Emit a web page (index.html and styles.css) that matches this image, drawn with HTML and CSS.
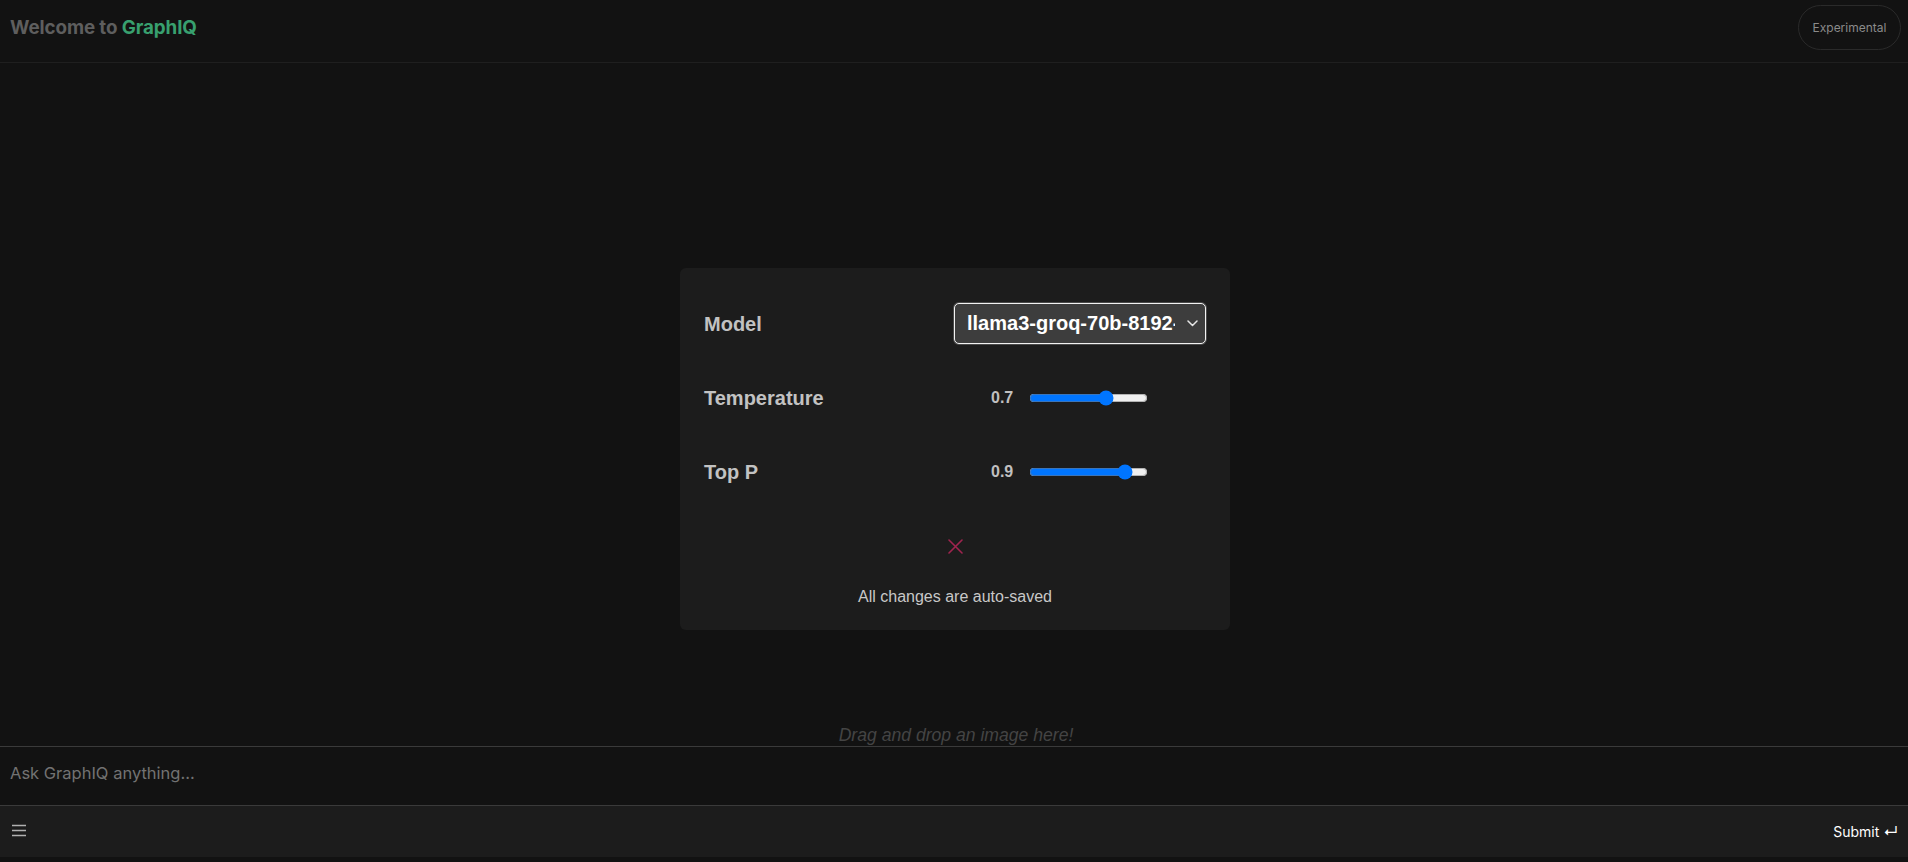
FILE: index.html
```html
<!DOCTYPE html>
<html lang="en">
<head>
<meta charset="utf-8">
<title>GraphIQ</title>
<link rel="stylesheet" href="styles.css">
</head>
<body>
<header class="topbar">
  <h1 class="brand">Welcome to <span class="brand-accent">GraphIQ</span></h1>
  <button class="pill">Experimental</button>
</header>
<main class="main">
  <section class="card">
    <div class="row">
      <label class="label" for="model">Model</label>
      <div class="control">
        <span class="select-wrap">
          <select id="model" class="select">
            <option>llama3-groq-70b-8192-tool-use-preview</option>
          </select>
          <svg class="chevron" width="11" height="7" viewBox="0 0 11 7"><path d="M1 1l4.5 4.5L10 1" fill="none" stroke="#e6e6e6" stroke-width="1.5" stroke-linecap="round" stroke-linejoin="round"/></svg>
        </span>
      </div>
    </div>
    <div class="row">
      <label class="label" for="temp">Temperature</label>
      <div class="control control-range">
        <span class="value">0.7</span>
        <input id="temp" class="range" type="range" min="0" max="1.05" step="0.01" value="0.7">
      </div>
    </div>
    <div class="row">
      <label class="label" for="topp">Top P</label>
      <div class="control control-range">
        <span class="value">0.9</span>
        <input id="topp" class="range" type="range" min="0" max="1.05" step="0.01" value="0.9">
      </div>
    </div>
    <div class="row row-center">
      <button class="close" aria-label="Close">
        <svg width="15" height="15" viewBox="0 0 15 15"><path d="M1 1l13 13M14 1L1 14" stroke="#a1244f" stroke-width="1.6" stroke-linecap="round"/></svg>
      </button>
    </div>
    <p class="note">All changes are auto-saved</p>
  </section>
  <p class="drop">Drag and drop an image here!</p>
</main>
<footer class="composer">
  <div class="input-area">
    <textarea class="input" placeholder="Ask GraphIQ anything..."></textarea>
  </div>
  <div class="toolbar">
    <button class="menu" aria-label="Menu">
      <svg width="16" height="13" viewBox="0 0 16 13"><path d="M1 1.5h14M1 6.5h14M1 11.5h14" stroke="#b0b0b0" stroke-width="1.5"/></svg>
    </button>
    <button class="submit">Submit <span class="enter">↵</span></button>
  </div>
</footer>
</body>
</html>
```
FILE: styles.css
```css
html, body {
  margin: 0;
  padding: 0;
}
body {
  height: 100vh;
  display: flex;
  flex-direction: column;
  background: #121212;
  font-family: "Liberation Sans", Arial, sans-serif;
  overflow: hidden;
}
button {
  font: inherit;
  background: none;
  border: none;
  padding: 0;
  cursor: pointer;
}
.topbar {
  height: 62px;
  box-sizing: content-box;
  border-bottom: 1px solid #1f1f1f;
  display: flex;
  align-items: center;
  justify-content: space-between;
  padding: 0 7px 0 10px;
}
.brand {
  margin: 0 0 7px 0;
  font-family: Inter, sans-serif;
  font-weight: 700;
  font-size: 18.8px;
  color: #5e5e5e;
  letter-spacing: -0.1px;
}
.brand-accent {
  color: #38a06f;
}
.pill {
  margin-bottom: 8px;
  width: 103px;
  height: 45px;
  border: 1px solid #2a2a2a;
  border-radius: 23px;
  color: #8a8a8a;
  font-family: Inter, sans-serif;
  font-size: 12px;
}
.main {
  flex: 1;
  display: flex;
  flex-direction: column;
  align-items: center;
  min-height: 0;
}
.card {
  margin: 205px 0 0 2px;
  width: 550px;
  box-sizing: border-box;
  padding: 24px;
  background: #1c1c1c;
  border-radius: 6px;
  display: flex;
  flex-direction: column;
  gap: 10px;
}
.row {
  height: 64px;
  display: flex;
  align-items: center;
}
.row-center {
  justify-content: center;
}
.label {
  width: 250px;
  flex: none;
  font-weight: 700;
  font-size: 20px;
  color: #c2c2c2;
}
.control {
  flex: 1;
  display: flex;
  align-items: center;
}
.control-range {
  padding-left: 37px;
  gap: 16px;
}
.select-wrap {
  position: relative;
  display: block;
  width: 252px;
  margin-top: -2px;
}
.select {
  appearance: none;
  -webkit-appearance: none;
  width: 252px;
  height: 41px;
  box-sizing: border-box;
  padding: 0 30px 0 12px;
  background: #3d3d3d;
  color: #ffffff;
  border: 1px solid #f2f2f2;
  border-radius: 5px;
  box-shadow: 0 0 0 1px #4a4a4a;
  font-family: "Liberation Sans", Arial, sans-serif;
  font-weight: 700;
  font-size: 20px;
  outline: none;
}
.chevron {
  position: absolute;
  right: 8px;
  top: 17px;
  pointer-events: none;
}
.value {
  font-weight: 700;
  font-size: 16px;
  color: #c0c0c0;
  width: 22px;
}
.range {
  width: 119px;
  margin: 0;
  accent-color: #0075ff;
}
.close {
  width: 15px;
  height: 15px;
  display: flex;
}
.note {
  margin: 0;
  height: 18px;
  line-height: 18px;
  text-align: center;
  font-size: 16px;
  color: #c8c8c8;
}
.drop {
  margin: auto 0 0 4px;
  line-height: 22px;
  font-style: italic;
  font-size: 17.6px;
  color: #444444;
}
.composer {
  border-top: 1px solid #3a3a3a;
  margin-bottom: 5px;
}
.input-area {
  height: 58px;
  border-bottom: 1px solid #3a3a3a;
  display: flex;
}
.input {
  flex: 1;
  resize: none;
  background: transparent;
  border: none;
  outline: none;
  padding: 16px 10px 0 10px;
  font-family: Inter, sans-serif;
  font-size: 16.5px;
  color: #dddddd;
}
.input::placeholder {
  color: #727272;
}
.toolbar {
  height: 51px;
  background: #1c1c1c;
  display: flex;
  align-items: center;
  justify-content: space-between;
  padding: 0 10px 0 11px;
}
.menu {
  display: flex;
  margin-top: -2px;
}
.submit {
  color: #ffffff;
  font-family: Inter, sans-serif;
  font-size: 14px;
}
.enter {
  font-size: 15px;
}
```
